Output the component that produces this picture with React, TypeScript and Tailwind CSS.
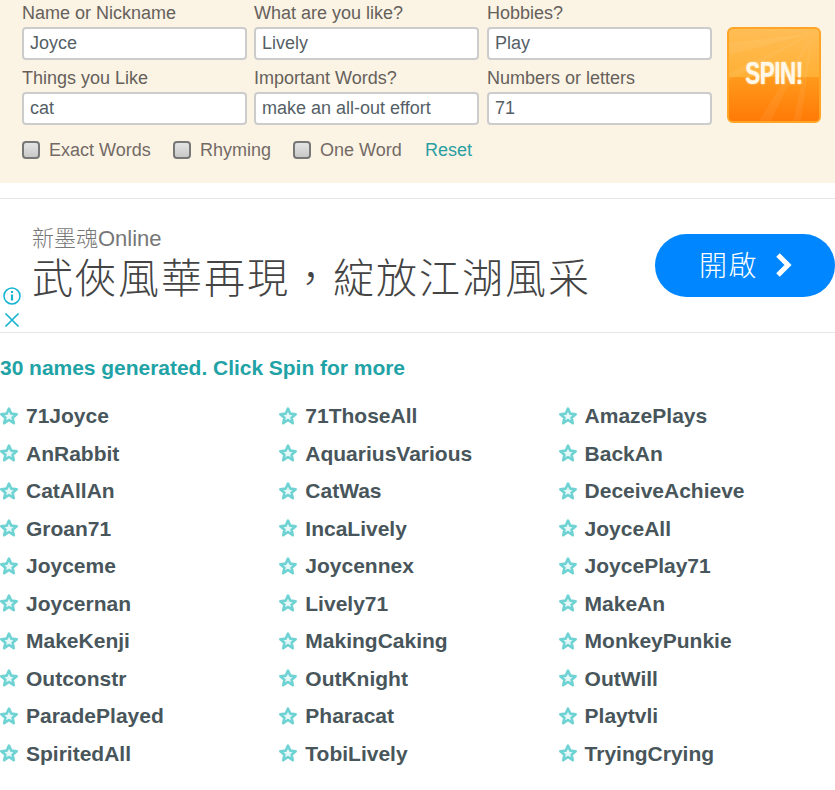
const fields = [
  ["Name or Nickname", "Joyce"],
  ["What are you like?", "Lively"],
  ["Hobbies?", "Play"],
  ["Things you Like", "cat"],
  ["Important Words?", "make an all-out effort"],
  ["Numbers or letters", "71"],
];

const options = [
  { label: "Exact Words", width: "w-[151px]" },
  { label: "Rhyming", width: "w-[120px]" },
  { label: "One Word", width: "w-[132px]" },
];

const names = [
  "71Joyce", "71ThoseAll", "AmazePlays",
  "AnRabbit", "AquariusVarious", "BackAn",
  "CatAllAn", "CatWas", "DeceiveAchieve",
  "Groan71", "IncaLively", "JoyceAll",
  "Joyceme", "Joycennex", "JoycePlay71",
  "Joycernan", "Lively71", "MakeAn",
  "MakeKenji", "MakingCaking", "MonkeyPunkie",
  "Outconstr", "OutKnight", "OutWill",
  "ParadePlayed", "Pharacat", "Playtvli",
  "SpiritedAll", "TobiLively", "TryingCrying",
];

const Star = () => (
  <svg width="20" height="20" viewBox="0 0 20 20" className="shrink-0 -ml-[1px]">
    <path
      d="M10 2.6l2.2 5 5.5.6-4.1 3.6 1.2 5.4L10 14l-4.8 3.2 1.2-5.4-4.1-3.6 5.5-.6z"
      fill="#e6f8f8"
      stroke="#6fd3d3"
      strokeWidth="2.6"
      strokeLinejoin="round"
    />
  </svg>
);

const SpinButton = () => (
  <button className="relative w-[94px] h-[96px] mt-[27px] ml-[15px] rounded-[6px] border-2 border-[#ffa424] overflow-hidden bg-[linear-gradient(#ffbd55,#ffb035_52%,#ff9a1c_52%,#ff7a06)]">
    <svg width="90" height="92" viewBox="0 0 90 92" className="absolute inset-0">
      <path
        d="M84 4L56 0L46 0zM84 4L26 0L12 0zM84 4L0 14L0 26zM84 4L0 44L0 52zM84 4L30 92L42 92zM84 4L64 92L72 92z"
        fill="#fff"
        opacity="0.06"
      />
    </svg>
    <span className="relative block text-center text-[#fff8e8] font-bold text-[31px] leading-none tracking-[-0.5px] mt-[-3px] scale-x-[0.72] [text-shadow:0_0_2px_#fff3d0] font-['Liberation_Sans',sans-serif]">
      SPIN!
    </span>
  </button>
);

export default function App() {
  return (
    <div className="w-[835px] h-[790px] bg-white overflow-hidden font-['Liberation_Sans',Arial,sans-serif]">
      <section className="h-[183px] bg-[#fbf4e4] flex pl-[22px]">
        <div className="w-[690px]">
          <div className="grid grid-cols-[232px_233px_225px]">
            {fields.map(([label, value]) => (
              <label key={label} className="block h-[65px] text-[#66605c]">
                <span className="block h-[27px] text-[18px] leading-[26px]">{label}</span>
                <input
                  readOnly
                  value={value}
                  className="block w-[225px] h-[33px] px-[6px] bg-white border-2 border-[#cccccc] rounded-[4px] text-[18px] text-[#555f66] outline-none"
                />
              </label>
            ))}
          </div>
          <div className="flex items-center mt-[8px] h-[24px] text-[18px]">
            {options.map((o) => (
              <label key={o.label} className={`flex items-center ${o.width} text-[#736a66]`}>
                <span className="w-[18px] h-[18px] rounded-[4px] border-2 border-[#777777] bg-[linear-gradient(#e4e4e4,#c8c8c8)] mr-[9px]" />
                {o.label}
              </label>
            ))}
            <a className="text-[#2a9ea3]">Reset</a>
          </div>
        </div>
        <SpinButton />
      </section>

      <section className="mt-[15px] h-[135px] border-y border-[#e6e6e6] flex relative">
        <div className="absolute left-[3px] top-[88px] flex flex-col items-center gap-[7px]">
          <svg width="18" height="18" viewBox="0 0 18 18">
            <circle cx="9" cy="9" r="8" fill="none" stroke="#19b4d2" strokeWidth="1.6" />
            <path d="M9 7.6v6M9 4v2" stroke="#19b4d2" strokeWidth="2.2" />
          </svg>
          <svg width="18" height="16" viewBox="0 0 18 16">
            <path d="M2.5 1.5l13 13M15.5 1.5l-13 13" stroke="#19b4d2" strokeWidth="1.7" />
          </svg>
        </div>
        <div className="pl-[32px] pt-[27px] font-['Liberation_Sans','Noto_Sans_CJK_TC',sans-serif]">
          <div className="text-[22px] leading-[26px] text-[#777777] font-light">新墨魂Online</div>
          <div className="text-[41px] leading-[44px] mt-[1px] text-[#444444] font-['Noto_Sans_CJK_TC',sans-serif] font-light tracking-[2px] whitespace-nowrap">
            武俠風華再現，綻放江湖風采
          </div>
        </div>
        <div className="absolute left-[655px] top-[35px] w-[180px] h-[63px] rounded-[32px] bg-[#0087ff] flex items-center text-white pl-[44px] pb-[4px] font-['Noto_Sans_CJK_TC',sans-serif]">
          <span className="text-[28px] font-light tracking-[1.5px]">開啟</span>
          <svg width="20" height="28" viewBox="0 0 20 28" className="ml-[16px] mt-[3px]">
            <path d="M4 4l10 10-10 10" fill="none" stroke="#fff" strokeWidth="5" />
          </svg>
        </div>
      </section>

      <h2 className="mt-[21px] text-[21px] tracking-[-0.03px] leading-[28px] font-bold text-[#1fa3a6]">
        30 names generated. Click Spin for more
      </h2>

      <ul className="mt-[15px] grid grid-cols-[279.3px_279.3px_1fr]">
        {names.map((n) => (
          <li key={n} className="h-[37.5px] flex items-center gap-[7px] text-[21px] font-bold text-[#48565b]">
            <Star />
            {n}
          </li>
        ))}
      </ul>
    </div>
  );
}
